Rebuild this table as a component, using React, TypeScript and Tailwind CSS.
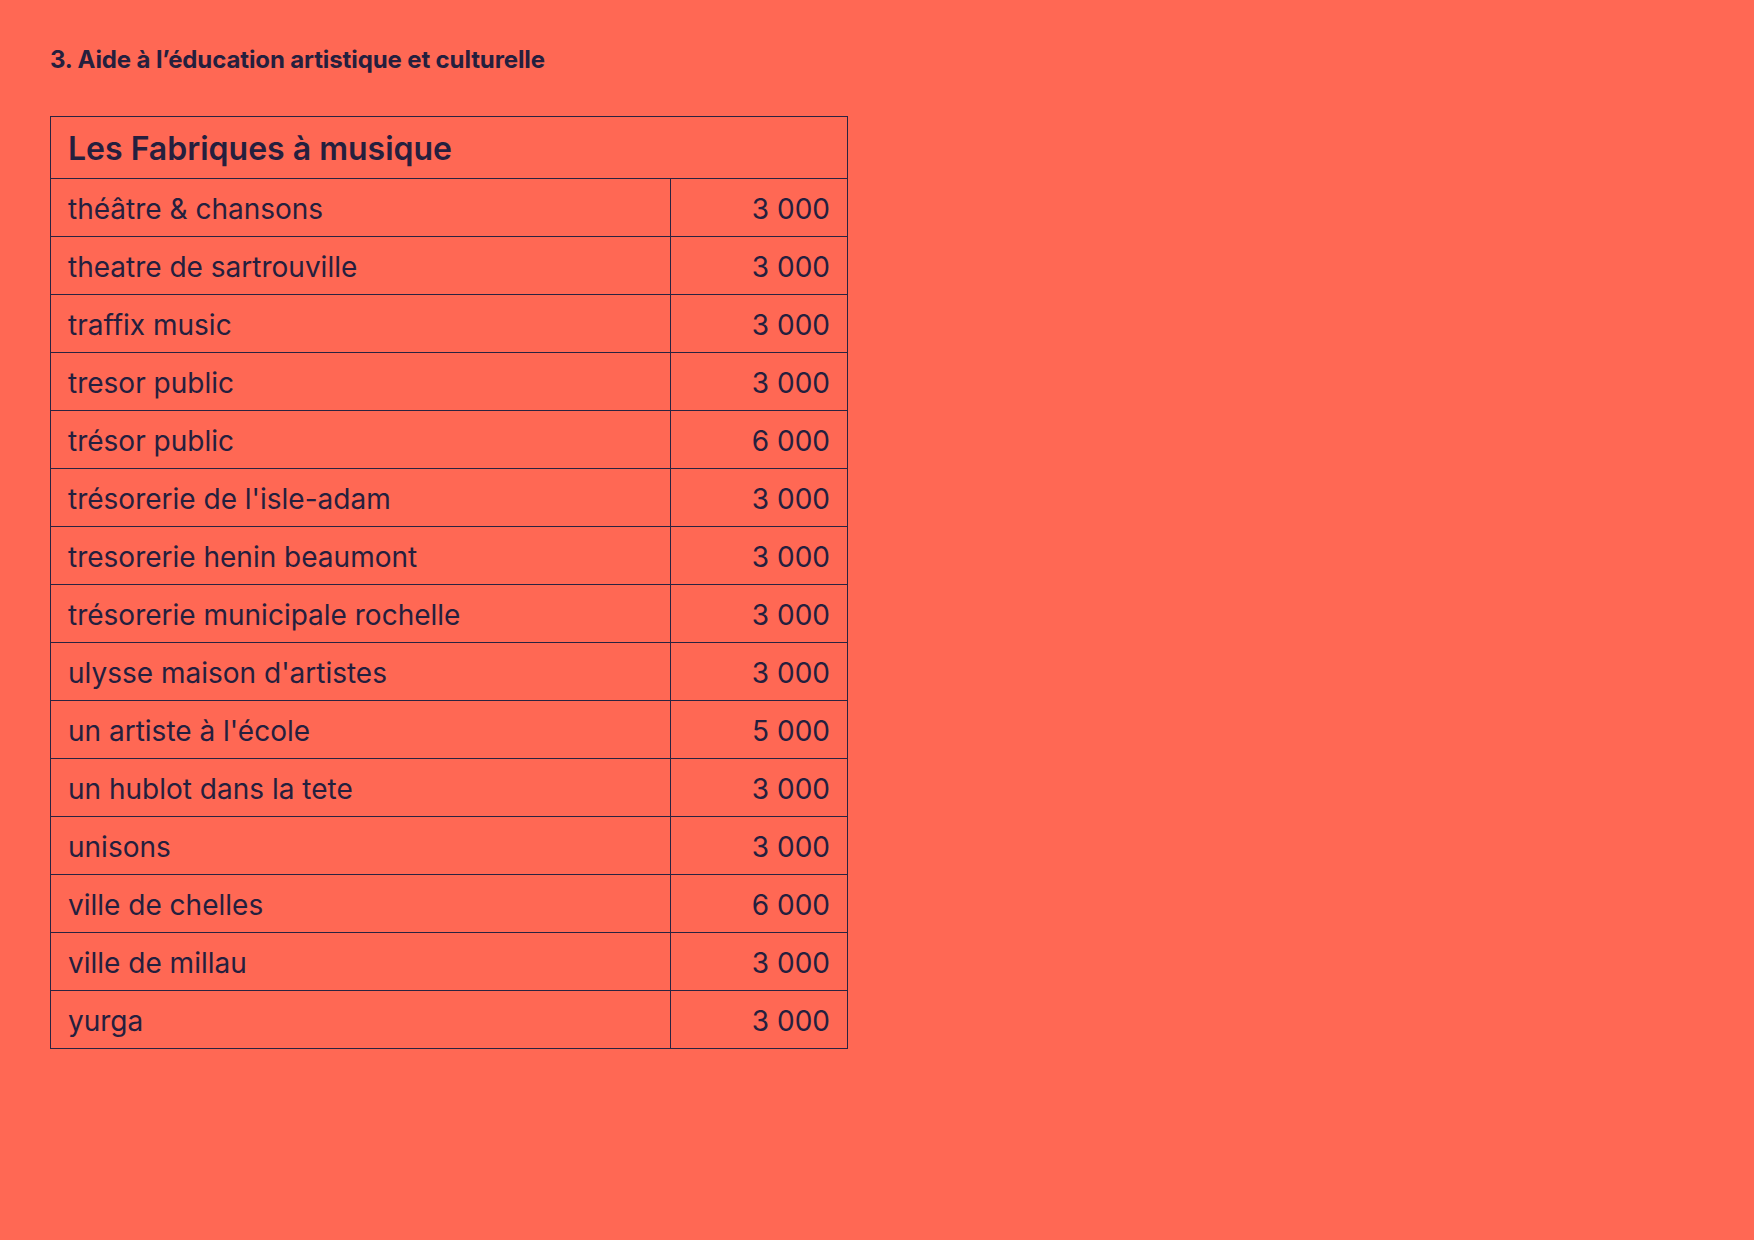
import React from "react";

const rows: [string, string][] = [
  ["théâtre & chansons", "3 000"],
  ["theatre de sartrouville", "3 000"],
  ["traffix music", "3 000"],
  ["tresor public", "3 000"],
  ["trésor public", "6 000"],
  ["trésorerie de l'isle-adam", "3 000"],
  ["tresorerie henin beaumont", "3 000"],
  ["trésorerie municipale rochelle", "3 000"],
  ["ulysse maison d'artistes", "3 000"],
  ["un artiste à l'école", "5 000"],
  ["un hublot dans la tete", "3 000"],
  ["unisons", "3 000"],
  ["ville de chelles", "6 000"],
  ["ville de millau", "3 000"],
  ["yurga", "3 000"],
];

export default function App() {
  return (
    <div
      className="w-[1754px] h-[1240px] bg-[#FF6854] text-[#251F3E] pl-[50px] pt-[45px]"
      style={{ fontFamily: "Inter, 'Noto Sans', sans-serif" }}
    >
      <h1 className="text-[24px] leading-[30px] font-bold tracking-[-0.005em]">
        3. Aide à l’éducation artistique et culturelle
      </h1>
      <div className="mt-[41px] w-[798px] border border-[#2B2340]">
        <div className="h-[61px] flex items-center pl-[17px] text-[32px] font-semibold pt-[3px]">
          Les Fabriques à musique
        </div>
        {rows.map(([name, amount], i) => (
          <div key={i} className="flex h-[58px] border-t border-[#2B2340]">
            <div className="w-[620px] border-r border-[#2B2340] flex items-center pl-[17px] pt-[3px] text-[28px]">
              {name}
            </div>
            <div className="flex-1 flex items-center justify-end pr-[17px] pt-[3px] text-[28px]">
              {amount}
            </div>
          </div>
        ))}
      </div>
    </div>
  );
}
